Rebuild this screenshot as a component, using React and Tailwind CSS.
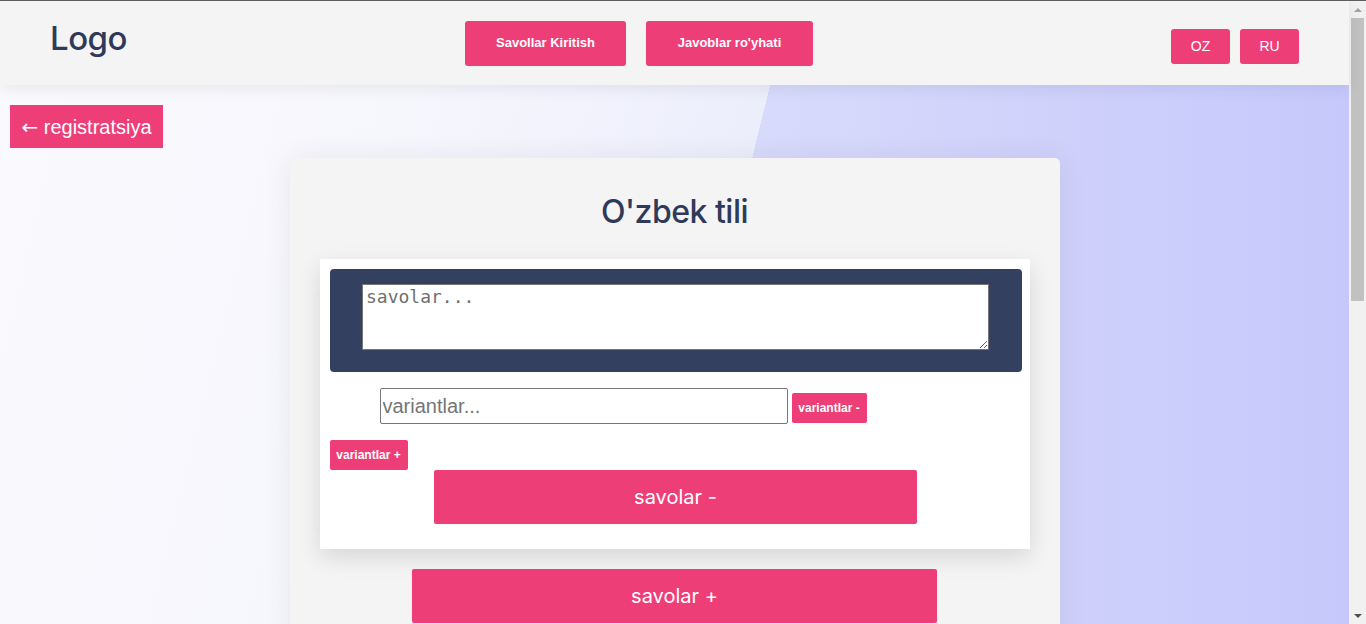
import React from 'react';

const pink = 'bg-[#ee3e78] text-white';

const Header = () => (
    <header className="relative z-10 h-[84px] shrink-0 bg-[#f4f4f4] shadow-[0_4px_14px_rgba(0,0,0,0.07)] flex items-center px-[50px]">
        <div className="self-start mt-[13px] w-[76px] text-[33px] leading-[48px] font-medium text-[#2f3a5a] font-['Inter',sans-serif] tracking-[-0.5px]">
            Logo
        </div>
        <nav className="ml-[339px] flex gap-[20px] font-['Liberation_Sans',Arial,sans-serif] font-bold text-[13px]">
            <button className={`${pink} w-[161px] h-[45px] rounded-[3px]`}>Savollar Kiritish</button>
            <button className={`${pink} w-[167px] h-[45px] rounded-[3px]`}>Javoblar ro'yhati</button>
        </nav>
        <div className="ml-auto mt-[6px] flex gap-[10px] font-['Liberation_Sans',Arial,sans-serif] text-[14px]">
            <button className={`${pink} w-[59px] h-[35px] rounded-[3px]`}>OZ</button>
            <button className={`${pink} w-[59px] h-[35px] rounded-[3px]`}>RU</button>
        </div>
    </header>
);

const Scrollbar = () => (
    <div className="w-[17px] shrink-0 bg-[#f1f1f1] flex flex-col items-center">
        <div className="h-[17px] flex items-center justify-center">
            <div className="w-0 h-0 border-l-[4px] border-r-[4px] border-b-[4px] border-l-transparent border-r-transparent border-b-[#a3a3a3]" />
        </div>
        <div className="w-[13px] h-[283px] bg-[#c1c1c1]" />
        <div className="flex-1" />
        <div className="h-[17px] flex items-center justify-center">
            <div className="w-0 h-0 border-l-[4px] border-r-[4px] border-t-[4px] border-l-transparent border-r-transparent border-t-[#505050]" />
        </div>
    </div>
);

export default function App() {
    return (
        <div className="h-[624px] overflow-hidden flex flex-col border-t border-[#5d5d5d]">
            <div className="flex flex-1 min-h-0">
                <div className="flex-1 flex flex-col bg-[linear-gradient(104deg,#fafafd_0%,#f6f6fd_30%,#eceefc_52.6%,transparent_52.6%),linear-gradient(90deg,#e2e3fc_0%,#d9dbfc_55%,#c6c8fb_100%)]">
                    <Header />
                    <div className="flex-1 min-h-0">
                        <button className={`${pink} ml-[10px] mt-[20px] h-[43px] w-[153px] text-[20px] font-['Liberation_Sans',Arial,sans-serif]`}>
                            <span className="font-['DejaVu_Sans',sans-serif]">←</span> registratsiya
                        </button>
                        <div className="mt-[10px] mx-auto w-[770px] bg-[#f4f4f4] rounded-[5px] shadow-[0_0_30px_rgba(0,0,0,0.07)] pt-[30px] pb-[40px]">
                            <h1 className="text-center text-[32px] leading-[48px] font-medium text-[#2f3a5a] font-['Inter',sans-serif] tracking-[-0.5px] mb-[23px]">
                                O'zbek tili
                            </h1>
                            <div className="mx-[30px] bg-white shadow-[0_8px_22px_rgba(0,0,0,0.12)] pt-[10px] pl-[10px] pr-[8px] pb-[25px]">
                                <div className="h-[103px] rounded-[4px] bg-[#344060] flex justify-center pt-[15px]">
                                    <textarea
                                        placeholder="savolar..."
                                        className="w-[627px] h-[66px] bg-white border border-[#767676] px-[3px] py-[1px] text-[18px] leading-[22px] font-['DejaVu_Sans_Mono',monospace] placeholder:text-[#6f6f6f] resize-y"
                                    />
                                </div>
                                <div className="mt-[16px] ml-[50px] flex gap-[4px]">
                                    <input
                                        placeholder="variantlar..."
                                        className="w-[408px] h-[36px] border border-[#767676] rounded-[2px] px-[2px] text-[20px] font-['Liberation_Sans',Arial,sans-serif] placeholder:text-[#757575]"
                                    />
                                    <button className={`${pink} self-end mb-[1px] w-[75px] h-[30px] rounded-[2px] text-[12px] font-bold font-['Liberation_Sans',Arial,sans-serif]`}>
                                        variantlar -
                                    </button>
                                </div>
                                <button className={`${pink} block mt-[16px] w-[78px] h-[30px] rounded-[2px] text-[12px] font-bold font-['Liberation_Sans',Arial,sans-serif]`}>
                                    variantlar +
                                </button>
                                <button className={`${pink} block mx-auto w-[483px] h-[54px] rounded-[2px] text-[20px] font-['Inter',sans-serif]`}>
                                    savolar -
                                </button>
                            </div>
                            <button className={`${pink} block mx-auto mt-[20px] w-[525px] h-[54px] rounded-[2px] text-[20px] font-['Inter',sans-serif]`}>
                                savolar +
                            </button>
                        </div>
                    </div>
                </div>
                <Scrollbar />
            </div>
        </div>
    );
}
